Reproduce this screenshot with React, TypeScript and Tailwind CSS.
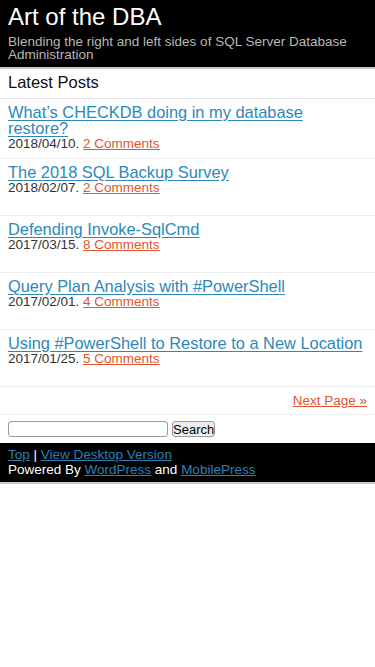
import React from "react";

const posts = [
  { title: "What’s CHECKDB doing in my database restore?", date: "2018/04/10.", comments: "2 Comments" },
  { title: "The 2018 SQL Backup Survey", date: "2018/02/07.", comments: "2 Comments" },
  { title: "Defending Invoke-SqlCmd", date: "2017/03/15.", comments: "8 Comments" },
  { title: "Query Plan Analysis with #PowerShell", date: "2017/02/01.", comments: "4 Comments" },
  { title: "Using #PowerShell to Restore to a New Location", date: "2017/01/25.", comments: "5 Comments" },
];

export default function App() {
  return (
    <div className="w-[375px] min-h-[667px] bg-white" style={{ fontFamily: '"Liberation Sans", Arial, sans-serif' }}>
      <header className="bg-black px-[8px] pt-[3px] pb-[6px] border-b-2 border-[#c8c8c8]">
        <h1 className="text-white text-[24px] leading-[28px] font-normal">Art of the DBA</h1>
        <p className="mt-[4px] text-[#b8b8b8] text-[13.5px] leading-[13px]">
          Blending the right and left sides of SQL Server Database Administration
        </p>
      </header>
      <div className="px-[8px] pt-[4px] pb-[7px] border-b border-[#e2e2e2]">
        <h2 className="text-[#111] text-[16.5px] leading-[18px] font-normal">Latest Posts</h2>
      </div>
      {posts.map((p, i) => (
        <div key={i} className="px-[8px] pt-[5px] pb-[7px] min-h-[57px] border-b border-[#ececec]">
          <a href="#" className="block text-[#2b89b9] underline underline-offset-2 text-[16.4px] leading-[16px]">
            {p.title}
          </a>
          <div className="text-[#333] text-[13.5px] leading-[15px]">
            {p.date}{" "}
            <a href="#" className="text-[#e2542b] underline">{p.comments}</a>
          </div>
        </div>
      ))}
      <div className="px-[8px] h-[28px] flex items-center justify-end border-b border-[#ececec]">
        <a href="#" className="text-[#e2542b] underline text-[13.5px] leading-[15px]">Next Page »</a>
      </div>
      <div className="px-[8px] pt-[6px] pb-[6px] flex items-center gap-[4px]">
        <input type="text" className="w-[160px] h-[16px] border border-[#9a9a9a] rounded-[3px] bg-white" />
        <button className="h-[16px] w-[43px] px-0 border border-[#9a9a9a] rounded-[3px] bg-[#eeeeee] text-black text-[13px] leading-[13px]">
          Search
        </button>
      </div>
      <footer className="bg-black px-[8px] pt-[5px] pb-[5px] border-b-2 border-[#c8c8c8] text-white text-[13.5px] leading-[14.5px]">
        <div>
          <a href="#" className="text-[#2b80b5] underline">Top</a> |{" "}
          <a href="#" className="text-[#2b80b5] underline">View Desktop Version</a>
        </div>
        <div>
          Powered By <a href="#" className="text-[#2b80b5] underline">WordPress</a> and{" "}
          <a href="#" className="text-[#2b80b5] underline">MobilePress</a>
        </div>
      </footer>
    </div>
  );
}
